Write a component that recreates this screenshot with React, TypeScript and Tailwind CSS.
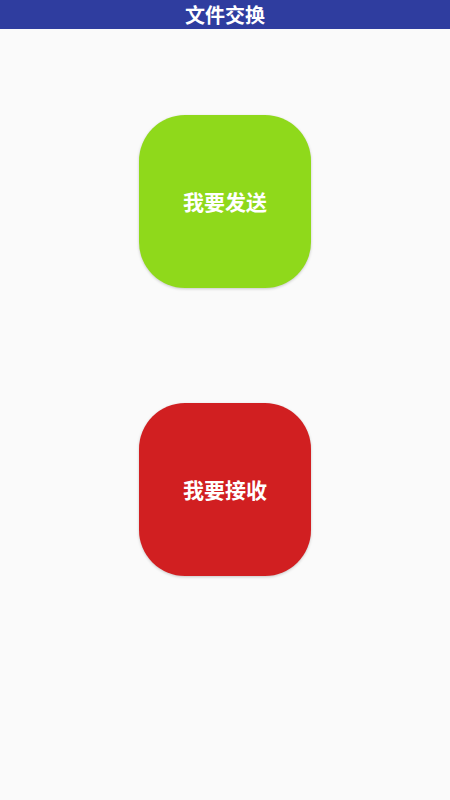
export default function App() {
  const font = { fontFamily: '"Noto Sans CJK SC", "Noto Sans", sans-serif' };
  return (
    <div className="min-h-screen w-full bg-[#fafafa] flex flex-col" style={font}>
      <header className="h-[29px] bg-[#2f3d9f] flex items-center justify-center">
        <h1 className="text-[20px] leading-none font-bold text-white">文件交换</h1>
      </header>
      <main className="flex flex-col items-center pt-[86px] gap-[115px]">
        <button className="w-[172px] h-[173px] rounded-[46px] bg-[#8fd91b] shadow-[0_1px_3px_rgba(0,0,0,0.2)] flex items-center justify-center text-white text-[21px] font-bold">
          我要发送
        </button>
        <button className="w-[172px] h-[173px] rounded-[46px] bg-[#d11f21] shadow-[0_1px_3px_rgba(0,0,0,0.2)] flex items-center justify-center text-white text-[21px] font-bold">
          我要接收
        </button>
      </main>
    </div>
  );
}
